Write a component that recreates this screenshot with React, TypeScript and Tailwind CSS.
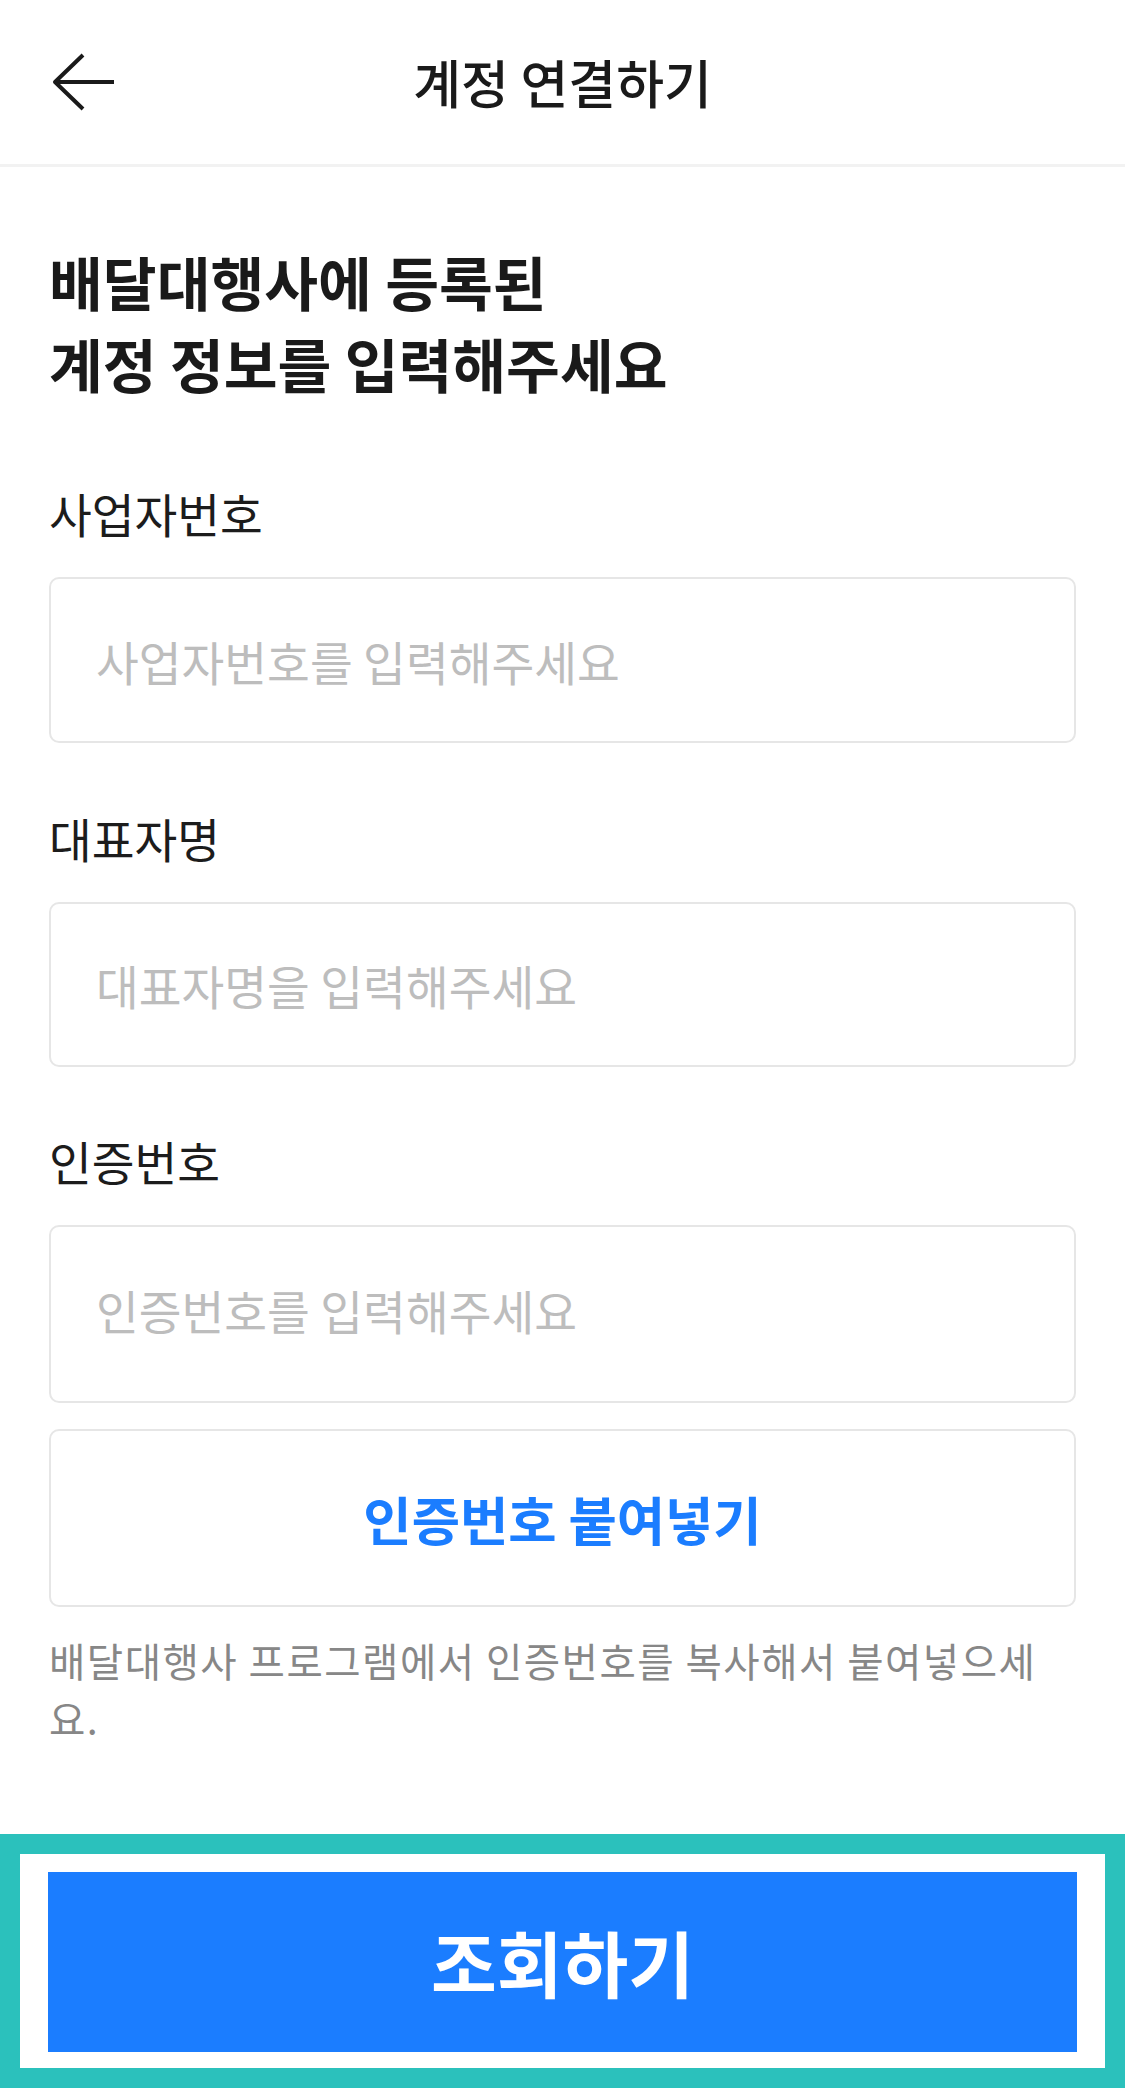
import { useState } from "react";

type FieldProps = {
  label: string;
  placeholder: string;
  top: string;
  box: string;
};

function Field({ label, placeholder, top, box }: FieldProps) {
  const [value, setValue] = useState("");
  return (
    <div className={top}>
      <label className="block text-[46.5px] leading-[60px] text-[#1c1c1c]">{label}</label>
      <input
        value={value}
        onChange={(e) => setValue(e.target.value)}
        placeholder={placeholder}
        className={`mt-[34px] block w-full ${box} rounded-[10px] border-2 border-[#e6e6e6] bg-white pl-[45px] text-[46.5px] text-[#1c1c1c] outline-none placeholder:text-[#bdbdbd]`}
      />
    </div>
  );
}

export default function App() {
  return (
    <div className="min-h-[2100px] bg-white font-['Noto_Sans_CJK_KR',sans-serif] text-[#1a1a1a]">
      <header className="grid h-[167px] grid-cols-[1fr_auto_1fr] items-center border-b-[3px] border-[#f2f2f2]">
        <button className="flex items-center pl-[52px]" aria-label="뒤로가기">
          <svg width="64" height="60" viewBox="0 0 64 60" fill="none">
            <path d="M2 30H62" stroke="#1a1a1a" strokeWidth="4" />
            <path d="M31 3L3 30L31 57" stroke="#1a1a1a" strokeWidth="4" strokeLinejoin="round" />
          </svg>
        </button>
        <h1 className="text-[52px] font-medium leading-none">계정 연결하기</h1>
        <div />
      </header>

      <main className="px-[49px] pt-[73px]">
        <h2 className="text-[58.5px] font-bold leading-[82px]">
          배달대행사에 등록된
          <br />
          계정 정보를 입력해주세요
        </h2>

        <Field label="사업자번호" placeholder="사업자번호를 입력해주세요" top="mt-[79px]" box="h-[166px]" />
        <Field label="대표자명" placeholder="대표자명을 입력해주세요" top="mt-[65px]" box="h-[165px]" />
        <Field label="인증번호" placeholder="인증번호를 입력해주세요" top="mt-[64px]" box="h-[178px] pb-[10px]" />

        <button className="mt-[26px] flex h-[178px] w-full items-center justify-center rounded-[10px] border-2 border-[#e6e6e6] bg-white text-[52.5px] font-bold text-[#1b7dff]">
          인증번호 붙여넣기
        </button>

        <p className="mt-[24px] text-[39.5px] leading-[58px] tracking-[1.5px] text-[#878787]">
          배달대행사 프로그램에서 인증번호를 복사해서 붙여넣으세요.
        </p>
      </main>

      <footer className="mt-[87px] border-[20px] border-[#2bc1bc] bg-white px-[28px] pt-[18px] pb-[16px]">
        <button className="flex h-[180px] w-full items-center justify-center bg-[#1b7dff] text-[71.5px] font-bold text-white">
          조회하기
        </button>
      </footer>
    </div>
  );
}
